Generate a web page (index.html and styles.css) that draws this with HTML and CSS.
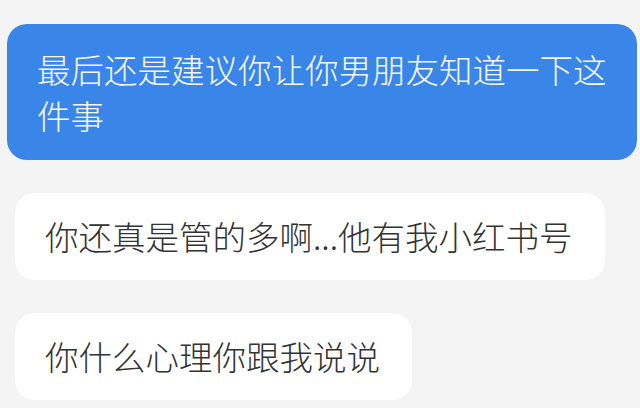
FILE: index.html
```html
<!DOCTYPE html>
<html lang="zh-CN">
<head>
  <meta charset="UTF-8">
  <meta name="viewport" content="width=device-width, initial-scale=1.0">
  <title>聊天记录</title>
  <link rel="stylesheet" href="styles.css">
</head>
<body>
  <div class="chat">
    <div class="msg msg-sent">最后还是建议你让你男朋友知道一下这件事</div>
    <div class="msg msg-recv">你还真是管的多啊...他有我小红书号</div>
    <div class="msg msg-recv">你什么心理你跟我说说</div>
  </div>
</body>
</html>
```

FILE: styles.css
```css
body {
  margin: 0;
  background-color: #f4f4f5;
  font-family: "Noto Sans CJK SC", "Noto Sans", sans-serif;
  overflow: hidden;
}
.chat {
  display: flex;
  flex-direction: column;
  align-items: flex-start;
  gap: 33px;
  padding: 24px 3px 0 7px;
}
.msg {
  font-size: 33.5px;
  font-weight: 300;
  line-height: 46px;
  border-radius: 20px;
  box-sizing: border-box;
}
.msg-sent {
  width: 630px;
  padding: 22px 30px;
  background-color: #3a86e8;
  color: #f4f8fe;
}
.msg-recv {
  margin-left: 8px;
  padding: 20px 32px 21px 30px;
  background-color: #fff;
  color: #333;
}
```
